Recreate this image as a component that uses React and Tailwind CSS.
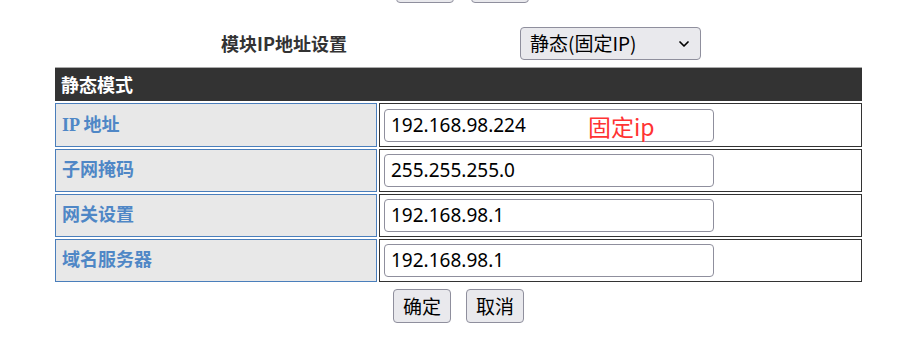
import React from "react";
import { ChevronDown } from "lucide-react";

const rows = [
  { label: "IP 地址", value: "192.168.98.224", note: "固定ip", h: "h-[44px]" },
  { label: "子网掩码", value: "255.255.255.0", h: "h-[43px]" },
  { label: "网关设置", value: "192.168.98.1", h: "h-[43px]" },
  { label: "域名服务器", value: "192.168.98.1", h: "h-[43px]" },
];

const btn =
  "w-[58px] h-[34px] shrink-0 bg-[#e9e9ed] border border-[#8f8f9d] rounded-[4px] text-[19px] text-black flex items-center justify-center";

const App = () => {
  return (
    <div className="w-[907px] h-[343px] overflow-hidden bg-white font-['Noto_Sans','Noto_Sans_CJK_SC',sans-serif]">
      {/* buttons of the previous block, only the bottom edge shows */}
      <div className="h-[3px] overflow-hidden flex items-end pl-[396px] gap-[17px]">
        <div className={btn}></div>
        <div className={btn}></div>
      </div>

      {/* mode select */}
      <div className="mt-[24px] h-[33px] flex items-center">
        <span className="ml-[221px] w-[299px] text-[18px] font-bold text-[#333] font-['Noto_Sans_CJK_SC',sans-serif]">
          模块IP地址设置
        </span>
        <div className="w-[181px] h-[33px] bg-[#e9e9ed] border border-[#8f8f9d] rounded-[4px] flex items-center pl-[9px] pr-[8px] text-[19px] text-black font-['Noto_Sans_CJK_SC',sans-serif]">
          <span className="flex-1">静态(固定IP)</span>
          <ChevronDown size={16} strokeWidth={2.6} />
        </div>
      </div>

      {/* static mode table */}
      <div className="mt-[7px] ml-[55px] w-[807px]">
        <div className="h-[34px] border-t border-[#aaa] bg-[#333] flex items-center pl-[6px] text-white text-[18px] font-bold font-['Noto_Sans_CJK_SC',sans-serif]">
          静态模式
        </div>
        {rows.map((r) => (
          <div key={r.label} className={`mt-[2px] flex gap-[2px] ${r.h}`}>
            <div className="w-[322px] border border-[#4a7ebb] bg-[#e8e8e8] flex items-center pl-[6px] text-[18px] font-bold text-[#4f87c6] font-['Liberation_Serif','Noto_Sans_CJK_SC',serif]">
              {r.label}
            </div>
            <div className="flex-1 border border-[#333] flex items-center pl-[4px] relative">
              <div className="w-[330px] h-[33px] border border-[#8f8f9d] rounded-[4px] flex items-center pl-[6px] text-[19px] text-black">
                {r.value}
              </div>
              {r.note && (
                <span className="absolute left-[208px] top-[8px] text-[23px] leading-[28px] text-[#f33] font-['Noto_Sans_CJK_SC',sans-serif]">
                  {r.note}
                </span>
              )}
            </div>
          </div>
        ))}
      </div>

      <div className="mt-[7px] ml-[55px] w-[807px] flex justify-center gap-[15px]">
        <button className={`${btn} font-['Noto_Sans_CJK_SC',sans-serif]`}>确定</button>
        <button className={`${btn} font-['Noto_Sans_CJK_SC',sans-serif]`}>取消</button>
      </div>
    </div>
  );
};

export default App;
